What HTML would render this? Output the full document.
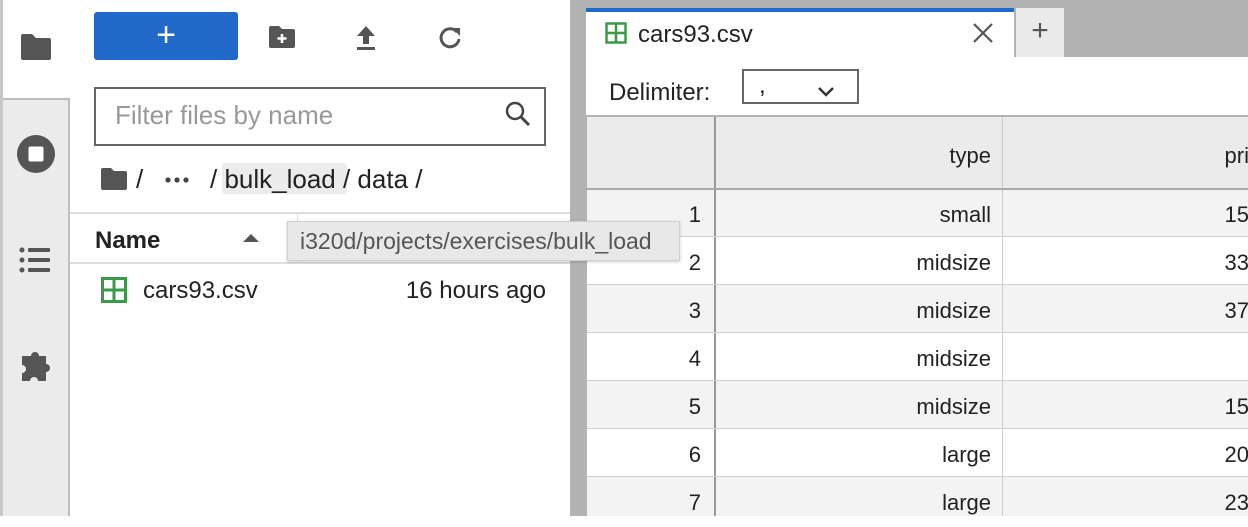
<!DOCTYPE html>
<html><head><style>
*{margin:0;padding:0;box-sizing:border-box}
body{width:1248px;height:516px;overflow:hidden;background:#fff;font-family:"Liberation Sans",sans-serif;position:relative;color:#222}
.a{position:absolute}
.cell{position:absolute;text-align:right;font-size:22px;line-height:48px;padding-right:14px}
</style></head><body>
<div class="a" style="left:0;top:0;width:70px;height:516px;background:#ebebeb;border-right:2px solid #bdbdbd"></div>
<div class="a" style="left:3px;top:0;width:67px;height:100px;background:#fff;border-bottom:2px solid #bdbdbd"></div>
<div class="a" style="left:0;top:0;width:3px;height:516px;background:#c8c8c8"></div>
<svg class="a" style="left:19px;top:32px" width="34" height="30" viewBox="0 0 34 30"><path d="M2 4a2 2 0 0 1 2-2h9l4 4h13a2 2 0 0 1 2 2v18a2 2 0 0 1-2 2H4a2 2 0 0 1-2-2z" fill="#555"/></svg>
<svg class="a" style="left:16px;top:134px" width="40" height="40" viewBox="0 0 40 40"><circle cx="20" cy="20" r="19" fill="#555"/><rect x="12.5" y="12.5" width="15" height="15" rx="2" fill="#fff"/></svg>
<svg class="a" style="left:18px;top:246px" width="34" height="28" viewBox="0 0 34 28"><g fill="#555"><circle cx="4" cy="4" r="2.5"/><circle cx="4" cy="14" r="2.5"/><circle cx="4" cy="24" r="2.5"/><rect x="10" y="2" width="22" height="4" rx="1"/><rect x="10" y="12" width="22" height="4" rx="1"/><rect x="10" y="22" width="22" height="4" rx="1"/></g></svg>
<svg class="a" style="left:18px;top:348px" width="38" height="38" viewBox="0 0 38 38"><path d="M3 10h9a4 4 0 1 1 8 0h7v8a4 4 0 1 1 0 8v9h-8a4 4 0 1 0-8 0H3v-8a4 4 0 1 0 0-8z" fill="#555" transform="translate(1,-2)"/></svg>

<div class="a" style="left:94px;top:12px;width:144px;height:48px;background:#2169c9;border-radius:3px;color:#fff;font-size:34px;text-align:center;line-height:46px">+</div>
<svg class="a" style="left:268px;top:25px" width="28" height="24" viewBox="0 0 28 24"><path d="M1 3a2 2 0 0 1 2-2h8l3 3h11a2 2 0 0 1 2 2v15a2 2 0 0 1-2 2H3a2 2 0 0 1-2-2z" fill="#555"/><path d="M14 9v9M9.5 13.5h9" stroke="#fff" stroke-width="2.6"/></svg>
<svg class="a" style="left:354px;top:24px" width="24" height="28" viewBox="0 0 24 28"><path d="M12 2L3 12h6v8h6v-8h6z" fill="#555"/><rect x="3" y="23" width="18" height="3" fill="#555"/></svg>
<svg class="a" style="left:437px;top:25px" width="26" height="26" viewBox="0 0 26 26"><path d="M20 7A9 9 0 1 0 22 14" fill="none" stroke="#555" stroke-width="3"/><path d="M15 3h8v8z" fill="#555"/></svg>
<div class="a" style="left:94px;top:87px;width:452px;height:59px;border:2px solid #666"></div>
<div class="a" style="left:115px;top:100px;font-size:26px;color:#999">Filter files by name</div>
<svg class="a" style="left:503px;top:99px" width="30" height="30" viewBox="0 0 30 30"><circle cx="12" cy="12" r="8" fill="none" stroke="#444" stroke-width="2.5"/><path d="M18 18l8 8" stroke="#444" stroke-width="3"/></svg>
<svg class="a" style="left:100px;top:167px" width="28" height="24" viewBox="0 0 28 24"><path d="M1 3a2 2 0 0 1 2-2h8l3 3h11a2 2 0 0 1 2 2v15a2 2 0 0 1-2 2H3a2 2 0 0 1-2-2z" fill="#555"/></svg>
<div class="a" style="left:222px;top:163px;width:125px;height:31px;background:#ececec;border-radius:3px"></div>
<div class="a" style="left:136px;top:164px;font-size:26px;color:#222">/</div>
<svg class="a" style="left:165px;top:176px" width="26" height="8"><g fill="#444"><circle cx="3" cy="4" r="2.6"/><circle cx="12" cy="4" r="2.6"/><circle cx="21" cy="4" r="2.6"/></g></svg>
<div class="a" style="left:210px;top:164px;font-size:26px;color:#222;white-space:pre">/ bulk_load / data /</div>
<div class="a" style="left:70px;top:212px;width:500px;height:52px;border-top:2px solid #ddd;border-bottom:2px solid #ddd"></div>
<div class="a" style="left:297px;top:214px;width:1px;height:48px;background:#ddd"></div>
<div class="a" style="left:95px;top:227px;font-size:24px;font-weight:bold">Name</div>
<svg class="a" style="left:242px;top:233px" width="18" height="10"><path d="M1 9L9 1l8 8z" fill="#555"/></svg>
<svg class="a" style="left:101px;top:277px" width="26" height="26" viewBox="0 0 26 26"><rect x="1.5" y="1.5" width="23" height="23" fill="none" stroke="#3a9a47" stroke-width="3"/><path d="M13 1v24M1 13h24" stroke="#3a9a47" stroke-width="3"/></svg>
<div class="a" style="left:143px;top:277px;font-size:24px">cars93.csv</div>
<div class="a" style="left:380px;width:166px;text-align:right;top:277px;font-size:24px">16 hours ago</div>

<div class="a" style="left:570px;top:0;width:678px;height:516px;background:#b3b3b3"></div>
<div class="a" style="left:586px;top:8px;width:428px;height:50px;background:#fff;border-top:4px solid #2169c9"></div>
<svg class="a" style="left:605px;top:22px" width="22" height="22" viewBox="0 0 22 22"><rect x="1.5" y="1.5" width="19" height="19" fill="none" stroke="#3a9a47" stroke-width="2.5"/><path d="M11 1v20M1 11h20" stroke="#3a9a47" stroke-width="2.5"/></svg>
<div class="a" style="left:638px;top:21px;font-size:24px">cars93.csv</div>
<svg class="a" style="left:972px;top:22px" width="22" height="22"><path d="M2 2l18 18M20 2L2 20" stroke="#555" stroke-width="2.2"/></svg>
<div class="a" style="left:1016px;top:8px;width:48px;height:49px;background:#eaeaea;text-align:center;font-size:30px;line-height:46px;color:#555">+</div>
<div class="a" style="left:586px;top:57px;width:662px;height:58px;background:#fff"></div>
<div class="a" style="left:609px;top:79px;font-size:24px">Delimiter:</div>
<div class="a" style="left:742px;top:69px;width:117px;height:35px;border:2px solid #666"></div>
<div class="a" style="left:759px;top:72px;font-size:24px">,</div>
<svg class="a" style="left:817px;top:86px" width="18" height="12"><path d="M2 2l7 7 7-7" fill="none" stroke="#333" stroke-width="2.5"/></svg>

<div class="a" style="left:587px;top:117px;width:661px;height:399px;background:#fff"></div>
<div class="a" style="left:587px;top:117px;width:661px;height:72px;background:#ebebeb"></div>
<div class="a" style="left:587px;top:189px;width:661px;height:48px;background:#f3f3f3"></div>
<div class="a" style="left:587px;top:285px;width:661px;height:48px;background:#f3f3f3"></div>
<div class="a" style="left:587px;top:381px;width:661px;height:48px;background:#f3f3f3"></div>
<div class="a" style="left:587px;top:477px;width:661px;height:39px;background:#f3f3f3"></div>
<div class="a" style="left:714px;top:117px;width:2px;height:399px;background:#999"></div>
<div class="a" style="left:1002px;top:117px;width:1px;height:399px;background:#ccc"></div>
<div class="a" style="left:587px;top:188px;width:661px;height:2px;background:#aaa"></div>
<div class="a" style="left:587px;top:236px;width:661px;height:1px;background:#d0d0d0"></div>
<div class="a" style="left:587px;top:284px;width:661px;height:1px;background:#d0d0d0"></div>
<div class="a" style="left:587px;top:332px;width:661px;height:1px;background:#d0d0d0"></div>
<div class="a" style="left:587px;top:380px;width:661px;height:1px;background:#d0d0d0"></div>
<div class="a" style="left:587px;top:428px;width:661px;height:1px;background:#d0d0d0"></div>
<div class="a" style="left:587px;top:476px;width:661px;height:1px;background:#d0d0d0"></div>
<div class="cell" style="left:716px;top:132px;width:289px">type</div>
<div class="cell" style="left:1003px;top:132px;width:260px">pri</div>
<div class="cell" style="left:587px;top:191px;width:128px">1</div><div class="cell" style="left:716px;top:191px;width:289px">small</div><div class="cell" style="left:1003px;top:191px;width:260px">15</div>
<div class="cell" style="left:587px;top:239px;width:128px">2</div><div class="cell" style="left:716px;top:239px;width:289px">midsize</div><div class="cell" style="left:1003px;top:239px;width:260px">33</div>
<div class="cell" style="left:587px;top:287px;width:128px">3</div><div class="cell" style="left:716px;top:287px;width:289px">midsize</div><div class="cell" style="left:1003px;top:287px;width:260px">37</div>
<div class="cell" style="left:587px;top:335px;width:128px">4</div><div class="cell" style="left:716px;top:335px;width:289px">midsize</div>
<div class="cell" style="left:587px;top:383px;width:128px">5</div><div class="cell" style="left:716px;top:383px;width:289px">midsize</div><div class="cell" style="left:1003px;top:383px;width:260px">15</div>
<div class="cell" style="left:587px;top:431px;width:128px">6</div><div class="cell" style="left:716px;top:431px;width:289px">large</div><div class="cell" style="left:1003px;top:431px;width:260px">20</div>
<div class="cell" style="left:587px;top:479px;width:128px">7</div><div class="cell" style="left:716px;top:479px;width:289px">large</div><div class="cell" style="left:1003px;top:479px;width:260px">23</div>
<div class="a" style="left:287px;top:221px;width:393px;height:40px;background:#e8e8e8;border:1px solid #d0d0d0;box-shadow:0 1px 3px rgba(0,0,0,.2);font-size:23px;color:#555;line-height:38px;padding-left:12px;white-space:nowrap;overflow:hidden;z-index:10">i320d/projects/exercises/bulk_load</div>
</body></html>
